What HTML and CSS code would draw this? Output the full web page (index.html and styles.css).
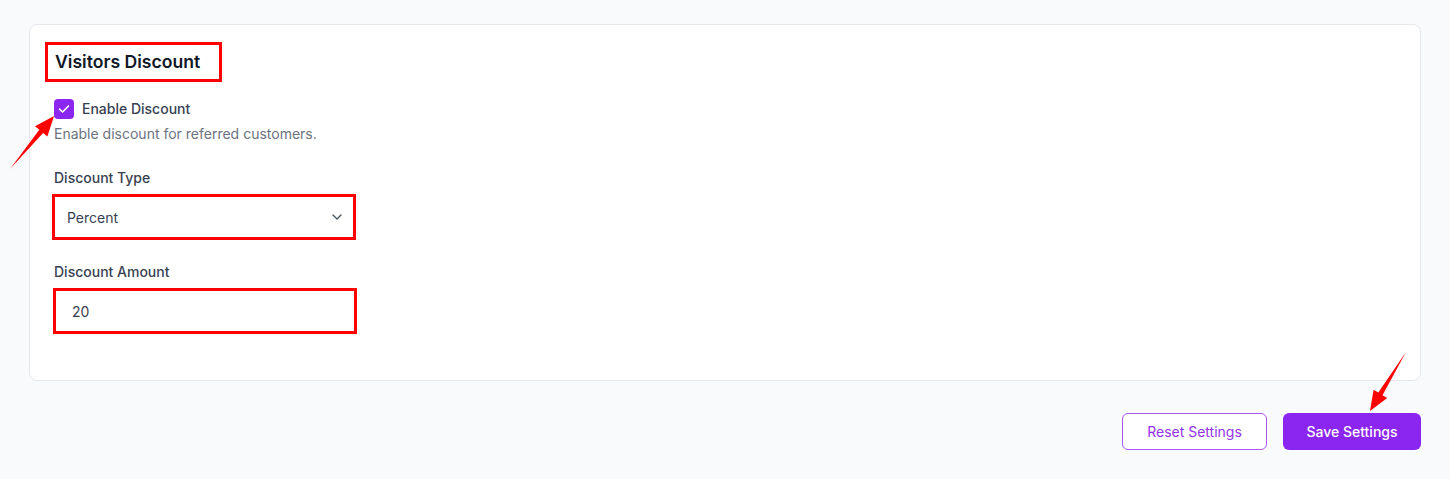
FILE: index.html
```html
<!DOCTYPE html>
<html lang="en">
<head>
    <meta charset="UTF-8">
    <meta name="viewport" content="width=device-width, initial-scale=1.0">
    <title>Visitors Discount</title>
    <link rel="stylesheet" href="styles.css">
</head>

<body>
    <main class="page">
        <section class="card">
            <h2 class="card-title">Visitors Discount</h2>

            <label class="check-row">
                <span class="checkbox">
                    <svg width="12" height="10" viewBox="0 0 12 10">
                        <path d="M1.5 5.2 L4.6 8 L10.5 2" fill="none" stroke="#fff" stroke-width="1.6" stroke-linecap="round" stroke-linejoin="round"/>
                    </svg>
                </span>
                <span class="check-label">Enable Discount</span>
            </label>
            <p class="help">Enable discount for referred customers.</p>

            <div class="field">
                <div class="field-label">Discount Type</div>
                <div class="select-box">
                    <span>Percent</span>
                    <svg width="10" height="6" viewBox="0 0 10 6">
                        <path d="M1 1 L5 5 L9 1" fill="none" stroke="#4b5563" stroke-width="1.4" stroke-linecap="round" stroke-linejoin="round"/>
                    </svg>
                </div>
            </div>

            <div class="field">
                <div class="field-label">Discount Amount</div>
                <div class="input-box">20</div>
            </div>
        </section>

        <div class="actions">
            <button class="btn btn-outline">Reset Settings</button>
            <button class="btn btn-primary">Save Settings</button>
        </div>
    </main>

    <!-- annotation arrows drawn over the page -->
    <svg class="marks" width="1450" height="479" viewBox="0 0 1450 479">
        <polygon fill="#ff0000" points="10,169 39.3,129.8 35,126.3 54,116 47.4,136.5 43.1,133"/>
        <polygon fill="#ff0000" points="1406,352 1382.5,395.2 1387.2,398.1 1370,411 1373.6,389.7 1378.3,392.6"/>
    </svg>
</body>
</html>
```

FILE: styles.css
```css
body {
    margin: 0;
    background: #f9fafb;
    color: #374151;
    font-family: 'Inter', 'Noto Sans', sans-serif;
    font-size: 14px;
}

.page {
    padding: 24px 29px 0 29px;
}

.card {
    background: #fff;
    border: 1px solid #e5e7eb;
    border-radius: 8px;
    padding: 17px 24px 46px 24px;
}

.card-title {
    display: inline-block;
    margin: 0 0 17px -9px;
    padding: 6px 19px 6px 7px;
    border: 3px solid #ff0000;
    font-size: 17.6px;
    line-height: 22px;
    font-weight: 600;
    color: #111827;
}

.check-row {
    display: flex;
    align-items: center;
    gap: 8px;
    height: 20px;
}

.checkbox {
    width: 20px;
    height: 20px;
    border-radius: 4px;
    background: #8b26f0;
    display: flex;
    align-items: center;
    justify-content: center;
}

.check-label {
    font-weight: 500;
    color: #374151;
    line-height: 20px;
}

.help {
    margin: 5px 0 0 0;
    line-height: 20px;
    color: #6b7280;
}

.field {
    margin-top: 24px;
}

.field + .field {
    margin-top: 22px;
}

.field-label {
    font-weight: 500;
    color: #374151;
    line-height: 20px;
    margin-bottom: 6px;
}

.select-box,
.input-box {
    box-sizing: border-box;
    width: 304px;
    height: 46px;
    border: 3px solid #ff0000;
    background: #fff;
    display: flex;
    align-items: center;
    color: #374151;
}

.select-box {
    margin-left: -2px;
    justify-content: space-between;
    padding: 0 11px 0 12px;
}

.input-box {
    margin-left: -1px;
    padding-left: 16px;
}

.actions {
    display: flex;
    justify-content: flex-end;
    gap: 16px;
    margin-top: 32px;
}

.btn {
    height: 37px;
    border-radius: 6px;
    font-family: inherit;
    font-size: 14px;
    cursor: pointer;
}

.btn-outline {
    width: 145px;
    background: #fff;
    border: 1px solid #a855f7;
    color: #9333ea;
}

.btn-primary {
    width: 138px;
    background: #8b26f0;
    border: none;
    color: #fff;
    font-weight: 500;
}

.marks {
    position: absolute;
    top: 0;
    left: 0;
    pointer-events: none;
}
```
